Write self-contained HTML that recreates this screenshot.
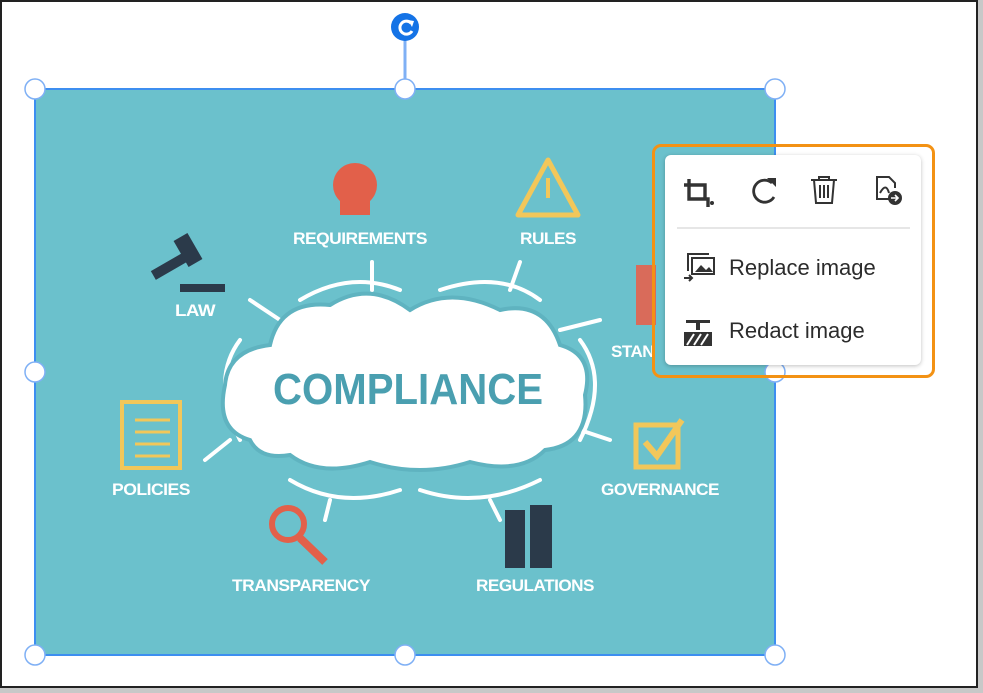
<!DOCTYPE html>
<html><head><meta charset="utf-8"><style>
body{margin:0;width:983px;height:693px;overflow:hidden;background:#c8c8c8;font-family:"Liberation Sans",sans-serif}
svg{position:absolute;left:0;top:0}
.lbl{font-family:"Liberation Sans",sans-serif;font-weight:bold;fill:#fff;font-size:17px;letter-spacing:-0.5px}
#pop{position:absolute;left:652px;top:144px;width:277px;height:228px;border:3px solid #f39214;border-radius:9px}
#card{position:absolute;left:665px;top:155px;width:256px;height:210px;background:#fff;border-radius:6px;box-shadow:0 1px 4px rgba(0,0,0,.25)}
.item{position:absolute;left:64px;font-size:22px;color:#2c2c2c}
</style></head><body>
<svg width="983" height="693">
<rect x="0" y="0" width="978" height="688" fill="#222"/>
<rect x="2" y="2" width="974" height="684" fill="#fff"/>
<rect x="35" y="89" width="740" height="566" fill="#6bc1cc" stroke="#3d8ef0" stroke-width="2"/>
<g stroke="#fff" stroke-width="4" fill="none" stroke-linecap="round">
<path d="M240 340 Q210 380 240 440"/><path d="M580 340 Q610 380 580 440"/>
<path d="M300 300 Q350 270 400 290"/><path d="M440 290 Q500 270 540 300"/>
<path d="M290 480 Q340 510 400 490"/><path d="M420 490 Q480 510 540 480"/>
<path d="M372 290 L372 262"/><path d="M510 290 L520 262"/><path d="M280 320 L250 300"/>
<path d="M560 330 L600 320"/><path d="M230 440 L205 460"/><path d="M580 430 L610 440"/>
<path d="M330 500 L325 520"/><path d="M490 500 L500 520"/>
</g>
<path d="M250 440 Q215 430 225 385 Q228 350 270 345 Q280 300 330 305 Q370 280 410 310 Q450 285 500 310 Q545 300 560 345 Q595 355 585 395 Q590 445 545 450 Q520 475 470 462 Q420 478 370 462 Q320 478 290 455 Q260 460 250 440Z" fill="#fff" stroke="#5fb3c0" stroke-width="4"/>
<text x="408" y="404" text-anchor="middle" font-family="Liberation Sans Narrow,Liberation Sans,sans-serif" font-weight="bold" font-size="44" fill="#4a9fb0" textLength="270" lengthAdjust="spacingAndGlyphs">COMPLIANCE</text>
<circle cx="355" cy="185" r="22" fill="#e2604a"/><rect x="340" y="200" width="30" height="15" fill="#e2604a"/>
<path d="M548 160 L578 215 L518 215Z" fill="none" stroke="#f2c75a" stroke-width="5" stroke-linejoin="round"/><rect x="546" y="178" width="4" height="20" fill="#f2c75a"/>
<g fill="#2b3a4a"><rect x="150" y="258" width="50" height="10" transform="rotate(-30 175 263)"/><rect x="180" y="235" width="16" height="30" transform="rotate(-30 188 250)"/><rect x="180" y="284" width="45" height="8"/></g>
<rect x="122" y="402" width="58" height="66" fill="none" stroke="#f2c75a" stroke-width="4"/>
<g stroke="#f2c75a" stroke-width="3"><path d="M135 420h35M135 432h35M135 444h35M135 456h35"/></g>
<circle cx="288" cy="524" r="16" fill="none" stroke="#e2604a" stroke-width="6"/><path d="M300 538 L325 562" stroke="#e2604a" stroke-width="8"/>
<rect x="505" y="510" width="20" height="58" fill="#2b3a4a"/><rect x="530" y="505" width="22" height="63" fill="#2b3a4a"/>
<rect x="636" y="425" width="42" height="42" fill="none" stroke="#f2c75a" stroke-width="5"/><path d="M645 442 L657 456 L682 420" stroke="#f2c75a" stroke-width="6" fill="none"/>
<rect x="636" y="265" width="20" height="60" fill="#d96b5a"/>
<text class="lbl" x="293" y="244" textLength="134" lengthAdjust="spacingAndGlyphs">REQUIREMENTS</text>
<text class="lbl" x="520" y="244" textLength="56" lengthAdjust="spacingAndGlyphs">RULES</text>
<text class="lbl" x="175" y="316" textLength="40" lengthAdjust="spacingAndGlyphs">LAW</text>
<text class="lbl" x="611" y="357">STAN</text>
<text class="lbl" x="112" y="495" textLength="78" lengthAdjust="spacingAndGlyphs">POLICIES</text>
<text class="lbl" x="601" y="495" textLength="118" lengthAdjust="spacingAndGlyphs">GOVERNANCE</text>
<text class="lbl" x="232" y="591" textLength="138" lengthAdjust="spacingAndGlyphs">TRANSPARENCY</text>
<text class="lbl" x="476" y="591" textLength="118" lengthAdjust="spacingAndGlyphs">REGULATIONS</text>
<line x1="405" y1="40" x2="405" y2="89" stroke="#7fb0f5" stroke-width="3"/>
<circle cx="405" cy="27" r="14" fill="#1473e6"/>
<path d="M411 23 A6.5 6.5 0 1 0 412 31" stroke="#fff" stroke-width="3" fill="none"/><path d="M408 20 L414 21 L412 27Z" fill="#fff"/>
<g fill="#fff" stroke="#7fb0f5" stroke-width="1.5">
<circle cx="35" cy="89" r="10"/><circle cx="405" cy="89" r="10"/><circle cx="775" cy="89" r="10"/>
<circle cx="35" cy="372" r="10"/><circle cx="775" cy="372" r="10"/>
<circle cx="35" cy="655" r="10"/><circle cx="405" cy="655" r="10"/><circle cx="775" cy="655" r="10"/>
</g>
</svg>
<div id="pop"></div>
<div id="card">
<svg width="256" height="210" style="position:absolute;left:0;top:0">
<g stroke="#333" stroke-width="3.4" fill="none">
<path d="M24 24 V44 H43 V52"/><path d="M19 30 H40 V44"/>
</g><circle cx="47" cy="48" r="2" fill="#333"/>
<path d="M107 28 A11 11 0 1 0 109 42" stroke="#333" stroke-width="2.8" fill="none"/><path d="M102 23 L111 23 L111 32Z" fill="#333"/>
<g stroke="#333" stroke-width="2" fill="none"><path d="M146 25h26M154 25v-3h10v3M149 25 L151 48 H167 L169 25"/><path d="M155 30v13M159 30v13M163 30v13"/></g>
<g stroke="#333" stroke-width="2" fill="none"><path d="M226 44 H212 V22 H224 L230 28 V33"/><path d="M215 38 Q221 27 224 38"/></g>
<circle cx="230" cy="43" r="7" fill="#333"/><path d="M226 43h7M230 40l3 3-3 3" stroke="#fff" stroke-width="1.6" fill="none"/>
<line x1="12" y1="73" x2="245" y2="73" stroke="#ddd" stroke-width="1.5"/>
<g stroke="#333" stroke-width="2" fill="none"><rect x="27" y="103" width="22" height="16"/><path d="M23 116 V99 H44"/><path d="M19 123 h8 M24 120 l3 3 -3 3"/></g>
<path d="M30 117 l6-7 5 5 3-3 4 5z" fill="#333"/>
<g fill="#333"><rect x="21" y="165" width="24" height="3"/><rect x="31" y="165" width="4" height="10"/><rect x="19" y="177" width="28" height="14"/></g>
<g stroke="#fff" stroke-width="2"><path d="M22 190 l7-11M29 190 l7-11M36 190 l7-11"/></g>
</svg>
<div class="item" style="top:100px">Replace image</div>
<div class="item" style="top:163px">Redact image</div>
</div>
</body></html>
